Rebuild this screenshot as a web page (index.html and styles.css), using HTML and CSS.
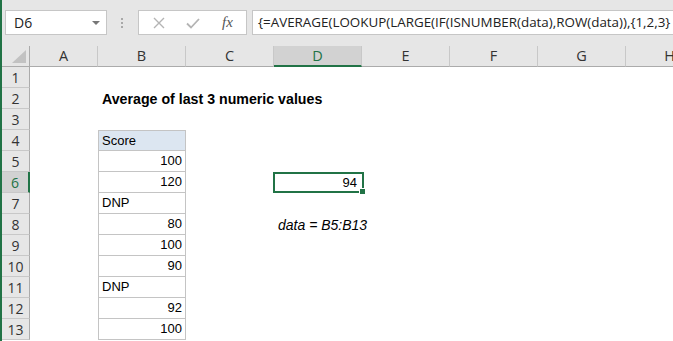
FILE: index.html
```html
<!DOCTYPE html>
<html lang="en">
<head>
    <meta charset="UTF-8">
    <meta name="viewport" content="width=device-width, initial-scale=1.0">
    <title>Average of last 3 numeric values</title>
    <link rel="stylesheet" href="styles.css">
</head>
<body>
<div class="app">

    <!-- name box + formula bar -->
    <div class="topbar">
        <div class="namebox">
            <span>D6</span>
            <span class="caret"></span>
        </div>
        <div class="grip"><i></i><i></i><i></i></div>
        <div class="fx-buttons">
            <svg class="ico" width="14" height="14" viewBox="0 0 14 14">
                <path d="M2 2 L12 12 M12 2 L2 12" stroke="#b4b4b4" stroke-width="1.4" fill="none"/>
            </svg>
            <svg class="ico" width="16" height="14" viewBox="0 0 16 14">
                <path d="M2 7.5 L6 11.5 L14 3" stroke="#b4b4b4" stroke-width="1.8" fill="none"/>
            </svg>
            <span class="fx">fx</span>
        </div>
        <div class="formula">{=AVERAGE(LOOKUP(LARGE(IF(ISNUMBER(data),ROW(data)),{1,2,3}</div>
    </div>

    <!-- worksheet -->
    <div class="sheet">
        <div class="row head">
            <div class="rh corner"><span class="tri"></span></div>
            <div class="ch col-a">A</div>
            <div class="ch">B</div>
            <div class="ch">C</div>
            <div class="ch active">D</div>
            <div class="ch">E</div>
            <div class="ch">F</div>
            <div class="ch">G</div>
            <div class="ch">H</div>
        </div>

        <div class="row"><div class="rh">1</div><div class="cell col-a"></div><div class="cell"></div></div>
        <div class="row"><div class="rh">2</div><div class="cell col-a"></div><div class="cell title">Average of last 3 numeric values</div></div>
        <div class="row"><div class="rh">3</div><div class="cell col-a"></div><div class="cell"></div></div>
        <div class="row"><div class="rh">4</div><div class="cell col-a"></div><div class="cell tb tb-top tb-head">Score</div></div>
        <div class="row"><div class="rh">5</div><div class="cell col-a"></div><div class="cell tb num">100</div></div>
        <div class="row">
            <div class="rh active">6</div><div class="cell col-a"></div><div class="cell tb num">120</div>
            <div class="cell"></div>
            <div class="cell selected num">94<span class="handle"></span></div>
        </div>
        <div class="row"><div class="rh">7</div><div class="cell col-a"></div><div class="cell tb">DNP</div></div>
        <div class="row">
            <div class="rh">8</div><div class="cell col-a"></div><div class="cell tb num">80</div>
            <div class="cell"></div>
            <div class="cell note">data = B5:B13</div>
        </div>
        <div class="row"><div class="rh">9</div><div class="cell col-a"></div><div class="cell tb num">100</div></div>
        <div class="row"><div class="rh">10</div><div class="cell col-a"></div><div class="cell tb num">90</div></div>
        <div class="row"><div class="rh">11</div><div class="cell col-a"></div><div class="cell tb">DNP</div></div>
        <div class="row"><div class="rh">12</div><div class="cell col-a"></div><div class="cell tb num">92</div></div>
        <div class="row"><div class="rh">13</div><div class="cell col-a"></div><div class="cell tb num">100</div></div>
    </div>

</div>
</body>
</html>
```

FILE: styles.css
```css
body {
    margin: 0;
    background: #ffffff;
    overflow: hidden;
}

.app {
    width: 671px;
    height: 341px;
    border-left: 2px solid #217346;
    overflow: hidden;
}

/* top bar */
.topbar {
    height: 46px;
    box-sizing: border-box;
    padding-top: 10px;
    background: #e6e6e6;
    display: flex;
    align-items: flex-start;
    font-family: "Open Sans", "Noto Sans", sans-serif;
    font-size: 14px;
    color: #222;
}

.namebox {
    margin-left: 3px;
    width: 102px;
    height: 25px;
    box-sizing: border-box;
    border: 1px solid #c6c6c6;
    background: #fff;
    display: flex;
    align-items: center;
    justify-content: space-between;
    padding: 0 6px 0 8px;
}

.caret {
    width: 0;
    height: 0;
    border-left: 4px solid transparent;
    border-right: 4px solid transparent;
    border-top: 4px solid #777;
}

.grip {
    width: 3px;
    margin: 8px 14px 0 14px;
    display: flex;
    flex-direction: column;
    gap: 2px;
}

.grip i {
    width: 2px;
    height: 2px;
    background: #a8a8a8;
}

.fx-buttons {
    width: 109px;
    height: 25px;
    box-sizing: border-box;
    border: 1px solid #c6c6c6;
    background: #fff;
    display: flex;
    align-items: center;
    padding-left: 13px;
    gap: 19px;
}

.fx {
    font-family: "Liberation Serif", serif;
    font-style: italic;
    font-size: 15px;
    color: #555;
    margin-left: 2px;
}

.formula {
    flex: 1;
    margin-left: 5px;
    height: 25px;
    box-sizing: border-box;
    border: 1px solid #c6c6c6;
    border-right: none;
    background: #fff;
    padding-left: 5px;
    font-size: 13.4px;
    line-height: 22px;
    white-space: nowrap;
}

/* worksheet */
.sheet {
    font-family: "Liberation Sans", Arial, sans-serif;
    font-size: 13px;
    color: #000;
}

.row {
    display: flex;
    height: 21px;
}

.rh {
    flex: none;
    width: 28px;
    box-sizing: border-box;
    background: #e6e6e6;
    border-right: 1px solid #ababab;
    border-bottom: 1px solid #c8c8c8;
    text-align: center;
    font-family: "Open Sans", "Noto Sans", sans-serif;
    font-size: 14px;
    line-height: 21px;
    color: #333;
}

.rh.active {
    background: #d2d2d2;
    border-right: 2px solid #217346;
    color: #217346;
}

.head {
    background: #e6e6e6;
}

.head .rh {
    border-bottom: 1px solid #ababab;
    position: relative;
}

.tri {
    position: absolute;
    right: 3px;
    bottom: 3px;
    width: 0;
    height: 0;
    border-left: 14px solid transparent;
    border-bottom: 13px solid #c2c2c2;
}

.ch {
    flex: none;
    width: 88px;
    box-sizing: border-box;
    border-right: 1px solid #c8c8c8;
    border-bottom: 1px solid #ababab;
    text-align: center;
    font-family: "Open Sans", "Noto Sans", sans-serif;
    font-size: 14.5px;
    line-height: 20px;
    color: #333;
}

.ch.active {
    background: #d2d2d2;
    border-bottom: 2px solid #217346;
    color: #217346;
}

.cell {
    flex: none;
    width: 88px;
    box-sizing: border-box;
    padding: 0 3px;
    line-height: 22px;
    white-space: nowrap;
}

.col-a {
    width: 68px;
}

.title {
    font-weight: bold;
    font-size: 14.2px;
    padding-left: 4px;
}

.tb {
    border-left: 1px solid #c4c4c4;
    border-right: 1px solid #c4c4c4;
    border-bottom: 1px solid #c4c4c4;
    line-height: 20px;
}

.tb-top {
    border-top: 1px solid #c4c4c4;
}

.tb-head {
    background: #dce6f1;
    line-height: 19px;
}

.num {
    text-align: right;
}

.selected {
    position: relative;
    width: 91px;
    margin-left: -1px;
    border: 2px solid #217346;
    line-height: 17px;
    padding-right: 5px;
}

.handle {
    position: absolute;
    right: -4px;
    bottom: -4px;
    width: 5px;
    height: 5px;
    background: #217346;
    border: 1px solid #fff;
}

.note {
    font-style: italic;
    font-size: 14px;
    padding-left: 4px;
}
```
